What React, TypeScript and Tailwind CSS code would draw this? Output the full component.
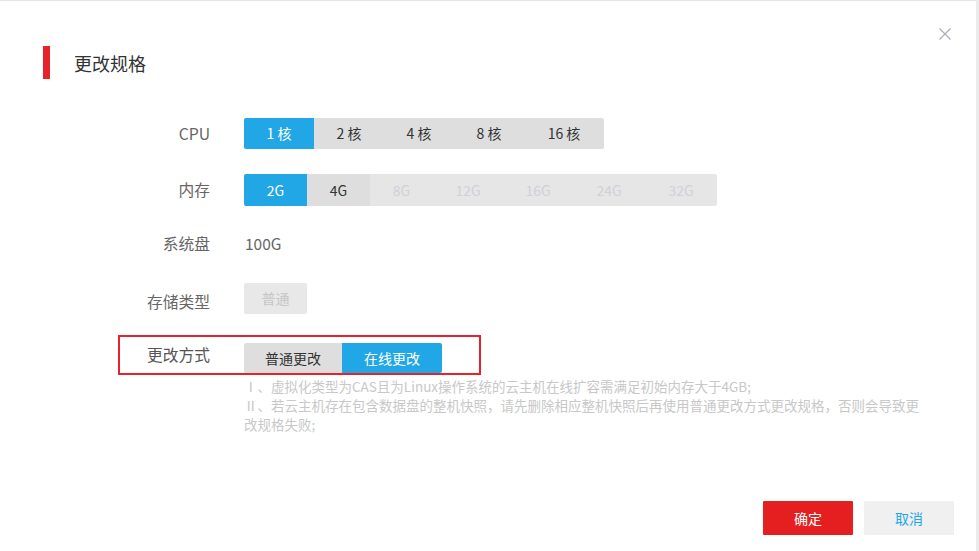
import React from 'react'

const cpus = [
  { label: '1 核', w: 'w-[70px]', active: true },
  { label: '2 核', w: 'w-[70px]' },
  { label: '4 核', w: 'w-[70px]' },
  { label: '8 核', w: 'w-[70px]' },
  { label: '16 核', w: 'w-[80px]' },
]

const mems = [
  { label: '2G', w: 'w-[63px]', active: true },
  { label: '4G', w: 'w-[63px]' },
  { label: '8G', w: 'w-[63px]', off: true },
  { label: '12G', w: 'w-[70px]', off: true },
  { label: '16G', w: 'w-[70px]', off: true },
  { label: '24G', w: 'w-[72px]', off: true },
  { label: '32G', w: 'w-[72px]', off: true },
]

type Opt = { label: string; w: string; active?: boolean; off?: boolean }

const Seg = ({ items, h }: { items: Opt[]; h: string }) => (
  <div className={`flex rounded-[2px] overflow-hidden ${h}`}>
    {items.map((it) => (
      <div
        key={it.label}
        className={`${it.w} flex items-center justify-center text-[14px] ${
          it.active
            ? 'bg-[#22a7e6] text-white'
            : it.off
            ? 'bg-[#e6e6e6] text-[#cfd0d8]'
            : 'bg-[#dedede] text-[#333]'
        }`}
      >
        {it.label}
      </div>
    ))}
  </div>
)

const Label = ({ children }: { children: React.ReactNode }) => (
  <div className="w-[210px] shrink-0 text-right text-[15.75px] text-[#666] leading-none">{children}</div>
)

const App = () => {
  return (
    <div
      className="w-[979px] h-[551px] flex bg-white overflow-hidden"
      style={{ fontFamily: '"Noto Sans CJK SC", "Liberation Sans", sans-serif' }}
    >
      <div className="flex-1 border-t border-[#e4e4ea] flex flex-col">
        {/* header */}
        <div className="flex items-start justify-between">
          <div className="flex items-center mt-[45px] ml-[43px]">
            <div className="w-[7px] h-[33px] bg-[#e8222a]" />
            <div className="ml-[24px] text-[18px] text-[#333] leading-none">更改规格</div>
          </div>
          <button className="mt-[26px] mr-[24px] w-[14px] h-[14px] text-[#a9aeb8]">
            <svg viewBox="0 0 14 14" width="14" height="14" stroke="currentColor" strokeWidth="1.2" fill="none">
              <path d="M1.5 1.5 L12.5 12.5 M12.5 1.5 L1.5 12.5" />
            </svg>
          </button>
        </div>

        {/* CPU */}
        <div className="flex items-center mt-[39px]">
          <Label>CPU</Label>
          <div className="ml-[34px]">
            <Seg items={cpus} h="h-[31px]" />
          </div>
        </div>

        {/* memory */}
        <div className="flex items-center mt-[25px]">
          <Label>内存</Label>
          <div className="ml-[34px]">
            <Seg items={mems} h="h-[32px]" />
          </div>
        </div>

        {/* system disk */}
        <div className="flex items-center mt-[30px] h-[16px]">
          <Label>系统盘</Label>
          <div className="ml-[35px] text-[15.5px] text-[#666] leading-none">100G</div>
        </div>

        {/* storage type */}
        <div className="flex items-center mt-[31px]">
          <div className="pt-[6px]">
            <Label>存储类型</Label>
          </div>
          <div className="ml-[34px] w-[63px] h-[31px] flex items-center justify-center bg-[#e8e8e8] text-[#c6c6c6] text-[14px] rounded-[2px]">
            普通
          </div>
        </div>

        {/* change method */}
        <div className="mt-[21px] ml-[118px] w-[363px] h-[40px] border-2 border-[#e8212b] flex items-center">
          <div className="w-[90px] text-right text-[15.75px] text-[#555] leading-none">更改方式</div>
          <div className="ml-[34px] mt-[6px] flex h-[30px] rounded-[2px] overflow-hidden">
            <div className="w-[98px] flex items-center justify-center bg-[#dedede] text-[14px] text-[#333]">普通更改</div>
            <div className="w-[100px] flex items-center justify-center bg-[#22a7e6] text-[14px] text-white">在线更改</div>
          </div>
        </div>

        {/* notes */}
        <div className="ml-[244px] mt-[2px] text-[13.5px] leading-[19px] text-[#c8c8c8] whitespace-nowrap">
          <p>Ⅰ、虚拟化类型为CAS且为Linux操作系统的云主机在线扩容需满足初始内存大于4GB;</p>
          <p>Ⅱ、若云主机存在包含数据盘的整机快照，请先删除相应整机快照后再使用普通更改方式更改规格，否则会导致更</p>
          <p>改规格失败;</p>
        </div>

        {/* footer */}
        <div className="mt-auto mb-[16px] flex justify-end gap-[11px] mr-[22px]">
          <button className="w-[90px] h-[34px] bg-[#e51f1f] text-white text-[14px] rounded-[1px]">确定</button>
          <button className="w-[90px] h-[34px] bg-[#f0f0f0] text-[#23a7e5] text-[14px] rounded-[1px]">取消</button>
        </div>
      </div>
      <div className="w-[3px] bg-[#ebebeb]" />
    </div>
  )
}

export default App
